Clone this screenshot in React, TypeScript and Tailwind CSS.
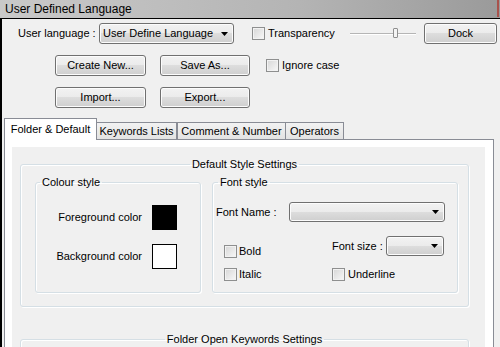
import React from "react";

const font = "font-['Liberation_Sans',Arial,sans-serif]";
const face =
  "shrink-0 rounded-[3px] border border-[#707070] bg-[linear-gradient(#f2f2f2_0%,#ebebeb_50%,#dddddd_50%,#cfcfcf_100%)] shadow-[inset_0_0_0_1px_#fcfcfc] flex items-center";
const btn = `${face} h-[21px] justify-center`;
const groupBox =
  "rounded-[3px] border border-[#d5dfe5] shadow-[inset_1px_1px_0_#ffffff,1px_1px_0_#ffffff]";

function Arrow() {
  return (
    <svg width="7" height="4" viewBox="0 0 7 4" aria-hidden className="shrink-0">
      <polygon points="0,0 7,0 3.5,4" fill="#000" />
    </svg>
  );
}

function Combo({ width, height = 21, label }: { width: string; height?: number; label?: string }) {
  return (
    <div className={`${face} ${width} pl-[3px] pr-[5px]`} style={{ height }}>
      <span className="whitespace-nowrap overflow-hidden">{label}</span>
      <span className="ml-auto flex">
        <Arrow />
      </span>
    </div>
  );
}

function Check({ label, gap = "ml-[3px]" }: { label: string; gap?: string }) {
  return (
    <div className="flex items-center">
      <span className="w-[13px] h-[13px] shrink-0 border border-[#8e8f8f] bg-[linear-gradient(135deg,#d6d6d6,#f8f8f8)] shadow-[inset_0_0_0_1px_#f2f2f2]" />
      <span className={`${gap} whitespace-nowrap leading-[13px]`}>{label}</span>
    </div>
  );
}

export default function App() {
  return (
    <div className={`w-[500px] h-[347px] overflow-hidden bg-[#f0f0f0] text-[11px] text-black ${font}`}>
      {/* title bar */}
      <div className="h-[18px] flex items-center bg-[linear-gradient(90deg,#c9c9c9,#b4b4b4_60%,#9a9a9a)]">
        <span className="ml-[5px] text-[12px] leading-none">User Defined Language</span>
        <span className="ml-auto mr-[1px] w-[2px] h-[17px] self-start bg-[#a9524c]" />
      </div>

      <div className="h-[329px] border-t border-l-2 border-black overflow-hidden">
        {/* row 1 */}
        <div className="mt-[4px] h-[21px] flex items-center pl-[16px]">
          <span className="w-[81px] whitespace-nowrap">User language :</span>
          <Combo width="w-[135px]" label="User Define Language" />
          <div className="ml-[18px] w-[98px]">
            <Check label="Transparency" />
          </div>
          <div className="relative w-[66px] h-[21px] flex items-center">
            <div className="w-full h-[2px] border-t border-[#b5b5b5] bg-white" />
            <span className="absolute left-[43px] top-[5px] w-[5px] h-[10px] border border-[#8f8f8f] rounded-[1px] bg-[#f4f4f4]" />
          </div>
          <div className={`${btn} ml-[8px] w-[73px]`}>Dock</div>
        </div>

        {/* row 2 */}
        <div className="mt-[11px] h-[21px] flex items-center pl-[53px]">
          <div className={`${btn} w-[91px]`}>Create New...</div>
          <div className={`${btn} ml-[14px] w-[90px]`}>Save As...</div>
          <div className="ml-[16px]">
            <Check label="Ignore case" />
          </div>
        </div>

        {/* row 3 */}
        <div className="mt-[11px] h-[21px] flex items-center pl-[53px]">
          <div className={`${btn} w-[91px] border-[#3c7fb1] shadow-[inset_0_0_0_1px_#bfe3fa]`}>Import...</div>
          <div className={`${btn} ml-[14px] w-[90px]`}>Export...</div>
        </div>

        {/* tabs */}
        <div className="mt-[10px] pl-[2px]">
          <div className="flex items-end h-[21px]">
            <div className="relative z-10 -mb-px h-[22px] w-[93px] border border-b-0 border-[#898c95] bg-white flex items-center justify-center whitespace-nowrap">
              Folder &amp; Default
            </div>
            <div className="h-[17px] w-[80px] border border-b-0 border-l-0 border-[#898c95] bg-[linear-gradient(#f2f2f2,#e3e3e3)] flex items-center justify-center whitespace-nowrap">
              Keywords Lists
            </div>
            <div className="h-[17px] w-[109px] border border-b-0 border-[#898c95] bg-[linear-gradient(#f2f2f2,#e3e3e3)] flex items-center justify-center whitespace-nowrap">
              Comment &amp; Number
            </div>
            <div className="h-[17px] w-[58px] border border-b-0 border-l-0 border-[#898c95] bg-[linear-gradient(#f2f2f2,#e3e3e3)] flex items-center justify-center whitespace-nowrap">
              Operators
            </div>
          </div>

          <div className="w-[490px] h-[220px] border border-[#898c95] bg-white pt-[7px] pl-[7px]">
            <div className="w-[473px] h-[220px] bg-[#f0f0f0] pt-[10px]">
              {/* Default Style Settings */}
              <fieldset className={`${groupBox} ml-[8px] w-[449px]`}>
                <legend className="mx-auto px-[2px] leading-[14px]">Default Style Settings</legend>
                <div className="flex gap-[11px] pl-[14px] pr-[10px] pb-[13px] mt-[4px]">
                  {/* Colour style */}
                  <fieldset className={`${groupBox} w-[166px]`}>
                    <legend className="ml-[4px] px-[2px] leading-[14px]">Colour style</legend>
                    <div className="mt-[16px] flex flex-col gap-[14px] pr-[23px] pb-[23px]">
                      <div className="flex items-center justify-end gap-[10px]">
                        <span>Foreground color</span>
                        <span className="w-[25px] h-[25px] bg-black" />
                      </div>
                      <div className="flex items-center justify-end gap-[10px]">
                        <span>Background color</span>
                        <span className="w-[25px] h-[25px] bg-white border border-black" />
                      </div>
                    </div>
                  </fieldset>

                  {/* Font style */}
                  <fieldset className={`${groupBox} w-[246px]`}>
                    <legend className="ml-[5px] px-[2px] leading-[14px]">Font style</legend>
                    <div className="mt-[13px] h-[20px] flex items-center pl-[3px]">
                      <span className="w-[73px] whitespace-nowrap">Font Name :</span>
                      <Combo width="w-[156px]" height={20} />
                    </div>
                    <div className="mt-[14px] h-[20px] flex items-start pl-[11px]">
                      <div className="w-[108px] pt-[9px]">
                        <Check label="Bold" gap="ml-[2px]" />
                      </div>
                      <div className="flex items-center h-[20px]">
                        <span className="w-[54px] whitespace-nowrap">Font size :</span>
                        <Combo width="w-[58px]" height={20} />
                      </div>
                    </div>
                    <div className="mt-[12px] flex pl-[11px]">
                      <div className="w-[108px]">
                        <Check label="Italic" gap="ml-[2px]" />
                      </div>
                      <Check label="Underline" />
                    </div>
                  </fieldset>
                </div>
              </fieldset>

              {/* Folder Open Keywords Settings */}
              <fieldset className={`${groupBox} mt-[25px] ml-[8px] w-[449px] h-[60px]`}>
                <legend className="mx-auto px-[2px] leading-[14px]">Folder Open Keywords Settings</legend>
              </fieldset>
            </div>
          </div>
        </div>
      </div>
    </div>
  );
}
